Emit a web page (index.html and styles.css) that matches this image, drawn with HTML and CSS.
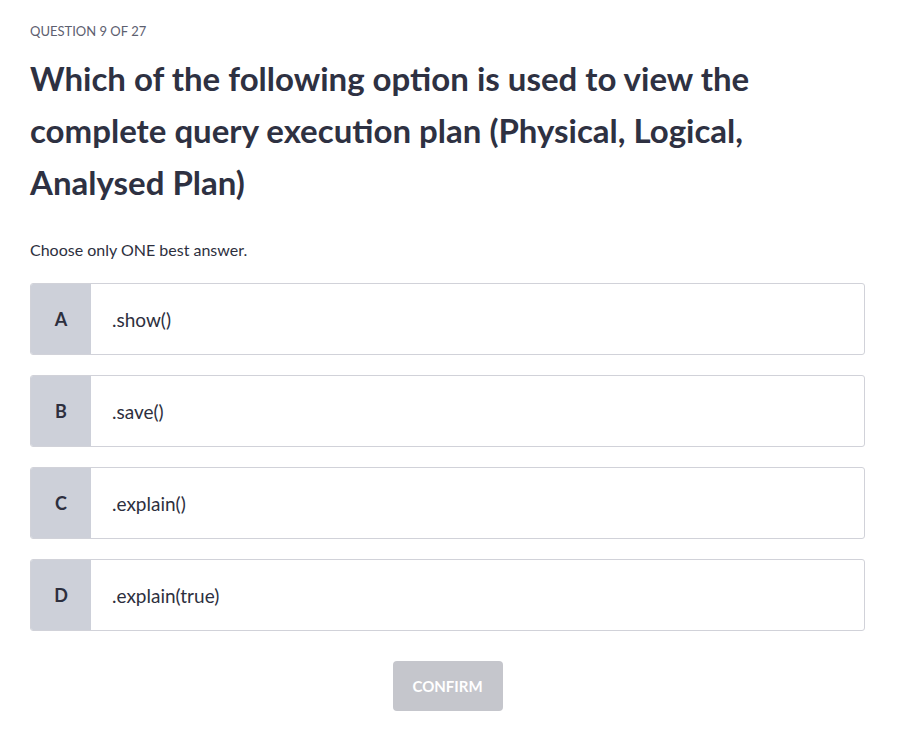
FILE: index.html
```html
<!DOCTYPE html>
<html lang="en">
<head>
<meta charset="utf-8">
<title>Question 9 of 27</title>
<link rel="stylesheet" href="styles.css">
</head>
<body>
<main class="quiz">
  <div class="counter">QUESTION 9 OF 27</div>
  <h1 class="title">Which of the following option is used to view the complete query execution plan (Physical, Logical, Analysed Plan)</h1>
  <p class="hint">Choose only ONE best answer.</p>
  <ul class="options">
    <li class="option"><span class="letter">A</span><span class="text">.show()</span></li>
    <li class="option"><span class="letter">B</span><span class="text">.save()</span></li>
    <li class="option"><span class="letter">C</span><span class="text">.explain()</span></li>
    <li class="option"><span class="letter">D</span><span class="text">.explain(true)</span></li>
  </ul>
  <div class="actions"><button class="confirm" type="button" disabled>CONFIRM</button></div>
</main>
</body>
</html>
```
FILE: styles.css
```css
* { box-sizing: border-box; }
html, body { margin: 0; padding: 0; background: #ffffff; }
body {
  font-family: Lato, "Noto Sans", sans-serif;
  color: #2d2f3e;
}
.quiz {
  padding: 22px 47px 0 30px;
  width: 912px;
}
.counter {
  font-size: 13px;
  line-height: 18px;
  color: #5d6070;
  text-transform: uppercase;
}
.title {
  margin: 12px 0 0;
  font-size: 33px;
  line-height: 52px;
  font-weight: 700;
  color: #2e3142;
  max-width: 800px;
}
.hint {
  margin: 31px 0 0;
  font-size: 16px;
  line-height: 22px;
  color: #2d2f3e;
}
.options {
  list-style: none;
  margin: 22px 0 0;
  padding: 0;
  display: flex;
  flex-direction: column;
  gap: 20px;
}
.option {
  display: flex;
  height: 72px;
  border: 1px solid #d1d2d9;
  border-radius: 3px;
  overflow: hidden;
  background: #fff;
}
.letter {
  width: 60px;
  flex: none;
  display: flex;
  align-items: center;
  justify-content: center;
  background: #cdd0d9;
  font-size: 18px;
  font-weight: 700;
  color: #2d2f3e;
}
.text {
  display: flex;
  align-items: center;
  padding-left: 21px;
  font-size: 19px;
  color: #2d2f3e;
}
.actions {
  display: flex;
  justify-content: center;
  margin-top: 30px;
}
.confirm {
  width: 110px;
  height: 50px;
  border: none;
  border-radius: 4px;
  background: #c5c6cc;
  color: #ffffff;
  font-family: Lato, "Noto Sans", sans-serif;
  font-size: 15px;
  font-weight: 700;
  letter-spacing: 0;
}
```
